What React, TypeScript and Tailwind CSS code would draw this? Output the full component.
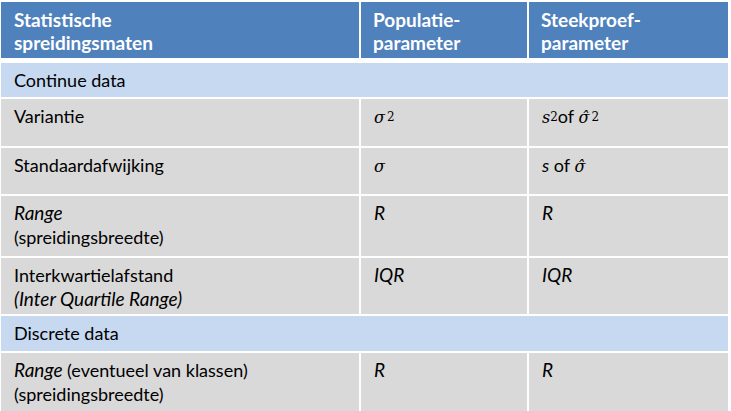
import React from "react";

const cols = "grid grid-cols-[358px_166px_199px] gap-x-[2px]";
const cell = "bg-[#d9d9d9] pl-[13px] pt-[5px] text-[18px] leading-[24px] text-black";

function Sigma({ hat, sq }: { hat?: boolean; sq?: boolean }) {
  return (
    <span className="font-['DejaVu_Serif','Liberation_Serif',serif] italic text-[16px]">
      {hat ? "σ\u0302" : "σ"}
      {sq && <sup className="not-italic text-[12px] ml-[2px] relative top-[-2px]">2</sup>}
    </span>
  );
}

function Row({ h, a, b, c }: { h: string; a: React.ReactNode; b: React.ReactNode; c: React.ReactNode }) {
  return (
    <div className={`${cols} ${h}`}>
      <div className={cell}>{a}</div>
      <div className={cell}>{b}</div>
      <div className={cell}>{c}</div>
    </div>
  );
}

function Section({ h, label }: { h: string; label: string }) {
  return (
    <div className={`bg-[#c6d9f1] pl-[13px] pt-[5px] text-[18px] leading-[24px] text-black w-[727px] ${h}`}>
      {label}
    </div>
  );
}

export default function App() {
  return (
    <div className="w-[731px] h-[411px] bg-white pt-[2px] pl-[1px] font-['Lato',sans-serif]">
      <div className="flex flex-col gap-y-[2px]">
        <div className={`${cols} h-[56px] mb-[3px]`}>
          <div className="bg-[#4f81bd] pl-[13px] pt-[6px] text-white font-bold text-[19px] leading-[23px]">
            Statistische<br />spreidingsmaten
          </div>
          <div className="bg-[#4f81bd] pl-[12px] pt-[6px] text-white font-bold text-[19px] leading-[23px]">
            Populatie-<br />parameter
          </div>
          <div className="bg-[#4f81bd] pl-[12px] pt-[6px] text-white font-bold text-[19px] leading-[23px]">
            Steekproef-<br />parameter
          </div>
        </div>

        <Section h="h-[34px]" label="Continue data" />

        <Row
          h="h-[47px]"
          a="Variantie"
          b={<Sigma sq />}
          c={
            <span>
              <span className="font-['DejaVu_Serif',serif] italic text-[16px]">s</span>
              <sup className="text-[12px] relative top-[-2px] font-['DejaVu_Serif',serif]">2</sup>of <Sigma hat sq />
            </span>
          }
        />
        <Row
          h="h-[46px]"
          a="Standaardafwijking"
          b={<Sigma />}
          c={
            <span>
              <span className="italic">s</span> of <Sigma hat />
            </span>
          }
        />
        <Row
          h="h-[60px]"
          a={
            <>
              <span className="italic text-[19px]">Range</span>
              <br />
              (spreidingsbreedte)
            </>
          }
          b={<span className="italic text-[19px]">R</span>}
          c={<span className="italic text-[19px]">R</span>}
        />
        <Row
          h="h-[56px]"
          a={
            <>
              Interkwartielafstand
              <br />
              <span className="italic text-[19px]">(Inter Quartile Range)</span>
            </>
          }
          b={<span className="italic text-[19px]">IQR</span>}
          c={<span className="italic text-[19px]">IQR</span>}
        />

        <Section h="h-[35px]" label="Discrete data" />

        <Row
          h="h-[58px]"
          a={
            <>
              <span className="italic text-[19px]">Range</span> (eventueel van klassen)
              <br />
              (spreidingsbreedte)
            </>
          }
          b={<span className="italic text-[19px]">R</span>}
          c={<span className="italic text-[19px]">R</span>}
        />
      </div>
    </div>
  );
}
